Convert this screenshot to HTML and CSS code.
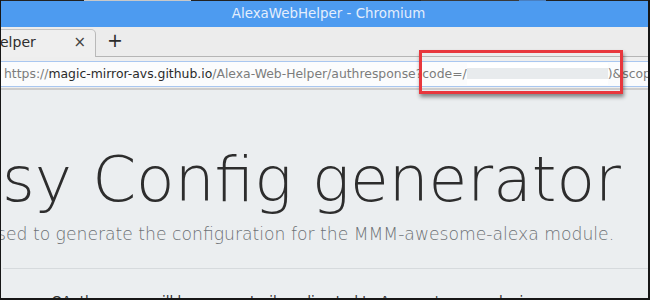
FILE: index.html
```html
<!DOCTYPE html>
<html>
<head>
<meta charset="utf-8">
<link rel="stylesheet" href="styles.css">
</head>
<body>
<div class="screen">
  <div class="desk-strip">
    <span class="seg seg-dark w83"></span><span class="seg seg-light w107"></span><span class="seg seg-dark w230"></span><span class="seg seg-mid w98"></span><span class="seg seg-blue w27"></span><span class="seg seg-dark grow"></span>
  </div>
  <div class="titlebar">AlexaWebHelper - Chromium</div>
  <div class="tabbar">
    <div class="tab">
      <span class="tab-title">elper</span>
      <span class="tab-close">×</span>
    </div>
    <div class="tab-rest">
      <span class="newtab">+</span>
    </div>
  </div>
  <div class="toolbar">
    <div class="omnibox">
      <span class="scheme">https://</span><span class="host">magic-mirror-avs.github.io</span><span class="path">/Alexa-Web-Helper/authresponse?code=/</span><span class="redacted"><span class="redacted-bar"></span></span><span class="path">)&amp;scope</span>
    </div>
  </div>
  <div class="page">
    <h1 class="display">sy Config generator</h1>
    <p class="lead">sed to generate the configuration for the MMM-awesome-alexa module.</p>
    <hr class="rule">
    <p class="body-text">mazon OAuth, so you will be momentarily redirected to Amazon's secure login servers.</p>
  </div>
  <div class="callout"></div>
</div>
</body>
</html>
```
FILE: styles.css
```css
html, body {
  margin: 0;
  padding: 0;
  background: #111;
}
.screen {
  position: relative;
  width: 647px;
  height: 298px;
  border-left: 1px solid #161616;
  border-right: 2px solid #161616;
  border-bottom: 2px solid #161616;
  overflow: hidden;
  display: flex;
  flex-direction: column;
  background: #ebeef0;
  font-family: "DejaVu Sans", sans-serif;
}
.desk-strip {
  display: flex;
  height: 1px;
  flex: none;
}
.seg { display: block; height: 1px; }
.seg-dark { background: #222; }
.seg-light { background: #c8c8c8; }
.seg-mid { background: #3a3a3a; }
.seg-blue { background: #4a7fc0; }
.w83 { width: 83px; }
.w107 { width: 107px; }
.w230 { width: 230px; }
.w98 { width: 98px; }
.w27 { width: 27px; }
.grow { flex: 1; }
.titlebar {
  flex: none;
  height: 26px;
  background: #4d9bf0;
  color: #e4eefc;
  font-size: 13.4px;
  line-height: 26px;
  text-align: center;
  padding-left: 8px;
  box-sizing: border-box;
}
.tabbar {
  flex: none;
  height: 30px;
  display: flex;
  background: #ececec;
}
.tab {
  width: 95px;
  box-sizing: border-box;
  display: flex;
  align-items: center;
  justify-content: space-between;
  padding: 0 9px 3px 0;
  background: #efefef;
  border-right: 1px solid #b9b9b9;
  border-top: 1px solid #c4c4c4;
  border-top-right-radius: 5px;
  margin-top: 2px;
  font-size: 14px;
  color: #2e2e2e;
}
.tab-title { margin-left: -1px; }
.tab-close { font-size: 15px; color: #444; }
.tab-rest {
  flex: 1;
  border-bottom: 1px solid #b5b5b5;
  display: flex;
  align-items: center;
  padding-left: 11px;
}
.newtab {
  font-size: 19px;
  color: #2b2b2b;
  line-height: 1;
  margin-top: -2px;
}
.toolbar {
  flex: none;
  height: 33px;
  background: #eeeeee;
  box-sizing: border-box;
  padding-top: 4px;
  border-bottom: 2px solid #cdcdcd;
}
.omnibox {
  height: 26px;
  box-sizing: border-box;
  background: #fbfcfd;
  border-top: 1px solid #a9c7f0;
  border-bottom: 1px solid #a9c7f0;
  display: flex;
  align-items: center;
  padding-left: 3px;
  padding-bottom: 1px;
  font-size: 12.4px;
  white-space: nowrap;
  color: #7c7c7c;
}
.host { color: #2a2a2a; }
.redacted {
  flex: none;
  width: 141px;
  height: 22px;
  display: flex;
  align-items: center;
  background: #ffffff;
}
.redacted-bar {
  display: block;
  width: 100%;
  height: 11px;
  background: #e8ebed;
}
.page {
  flex: 1;
  padding: 0 0 0 2px;
  overflow: hidden;
}
.display {
  margin: 52px 0 0 -1px;
  font-family: "DejaVu Sans ExtraLight", "DejaVu Sans", sans-serif;
  font-size: 63px;
  font-weight: 200;
  line-height: 1.2;
  color: #2d2d2d;
  white-space: nowrap;
}
.lead {
  margin: 6px 0 0 -6px;
  font-size: 17.2px;
  line-height: 1.164;
  font-weight: 300;
  color: #6d7175;
  white-space: nowrap;
}
.rule {
  margin: 24px 0 0 0;
  border: 0;
  border-top: 1px solid #d6dadd;
}
.body-text {
  margin: 25px 0 0 -1px;
  font-size: 13.5px;
  line-height: 1.164;
  color: #333;
  white-space: nowrap;
}
.callout {
  position: absolute;
  left: 418px;
  top: 50px;
  width: 204px;
  height: 44px;
  box-sizing: border-box;
  border: 3px solid #e8373d;
  box-shadow: 1px 3px 4px rgba(0, 0, 0, 0.45);
}
```
